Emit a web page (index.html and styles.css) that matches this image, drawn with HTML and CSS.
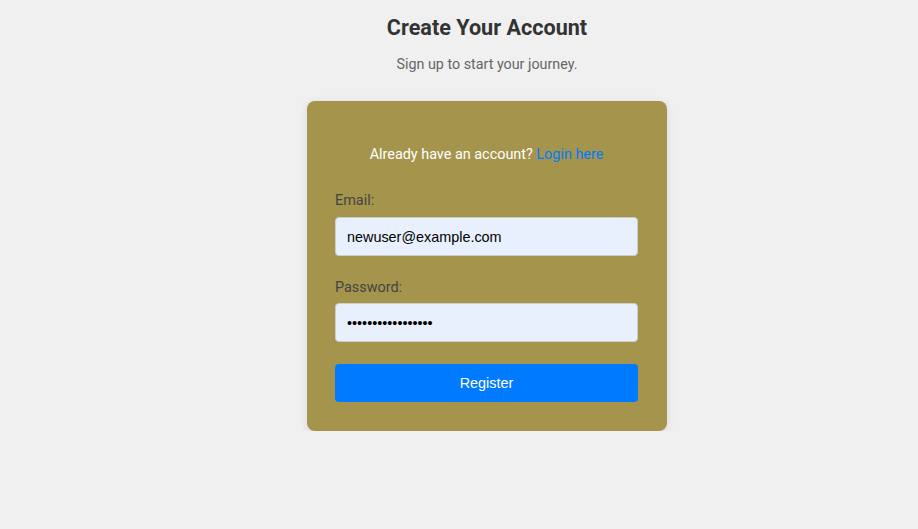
FILE: index.html
```html
<!DOCTYPE html>
<html lang="en">
<head>
<meta charset="utf-8">
<title>Create Your Account</title>
<link rel="stylesheet" href="styles.css">
</head>
<body>
<main class="page">
  <h1 class="title">Create Your Account</h1>
  <p class="subtitle">Sign up to start your journey.</p>
  <form class="card">
    <p class="login-note">Already have an account? <a href="#" class="login-link">Login here</a></p>
    <div class="field">
      <label class="label" for="email">Email:</label>
      <input class="input" id="email" type="email" value="newuser@example.com">
    </div>
    <div class="field">
      <label class="label" for="password">Password:</label>
      <input class="input" id="password" type="password" value="securepassword123">
    </div>
    <button class="btn" type="button">Register</button>
  </form>
</main>
</body>
</html>
```
FILE: styles.css
```css
html, body {
  margin: 0;
  padding: 0;
  background: #f0f0f0;
}
body {
  font-family: Roboto, "Noto Sans", sans-serif;
  color: #333;
}
.page {
  display: flex;
  flex-direction: column;
  align-items: center;
  padding: 15px 0 0 56px;
}
.title {
  margin: 0;
  font-size: 21.6px;
  font-weight: 700;
  line-height: 26px;
  color: #333;
}
.subtitle {
  margin: 14px 0 0;
  font-size: 14.3px;
  line-height: 18px;
  color: #666;
}
.card {
  margin-top: 28px;
  width: 360px;
  box-sizing: border-box;
  padding: 44px 29px 29px 28px;
  background: #a5944c;
  border-radius: 8px;
  box-shadow: 0 2px 8px rgba(0,0,0,0.1);
}
.login-note {
  margin: 0 0 27px;
  text-align: center;
  font-size: 14.4px;
  line-height: 20px;
  color: #fff;
}
.login-link {
  color: #007bff;
  text-decoration: none;
}
.field {
  margin-bottom: 22px;
}
.field + .field .label {
  padding-top: 1px;
  margin-bottom: 6px;
}
.label {
  display: block;
  font-size: 14.4px;
  line-height: 18px;
  color: #444;
  margin-bottom: 7px;
}
.input {
  display: block;
  width: 100%;
  box-sizing: border-box;
  height: 39px;
  padding: 0 11px;
  border: 1px solid #ccc;
  border-radius: 4px;
  background: #e8f0fe;
  font-family: "Liberation Sans", Arial, sans-serif;
  font-size: 14.4px;
  color: #000;
}
.btn {
  display: block;
  width: 100%;
  height: 38px;
  border: 0;
  border-radius: 4px;
  background: #007bff;
  color: #fff;
  font-family: "Liberation Sans", Arial, sans-serif;
  font-size: 14.4px;
  cursor: pointer;
}
```
